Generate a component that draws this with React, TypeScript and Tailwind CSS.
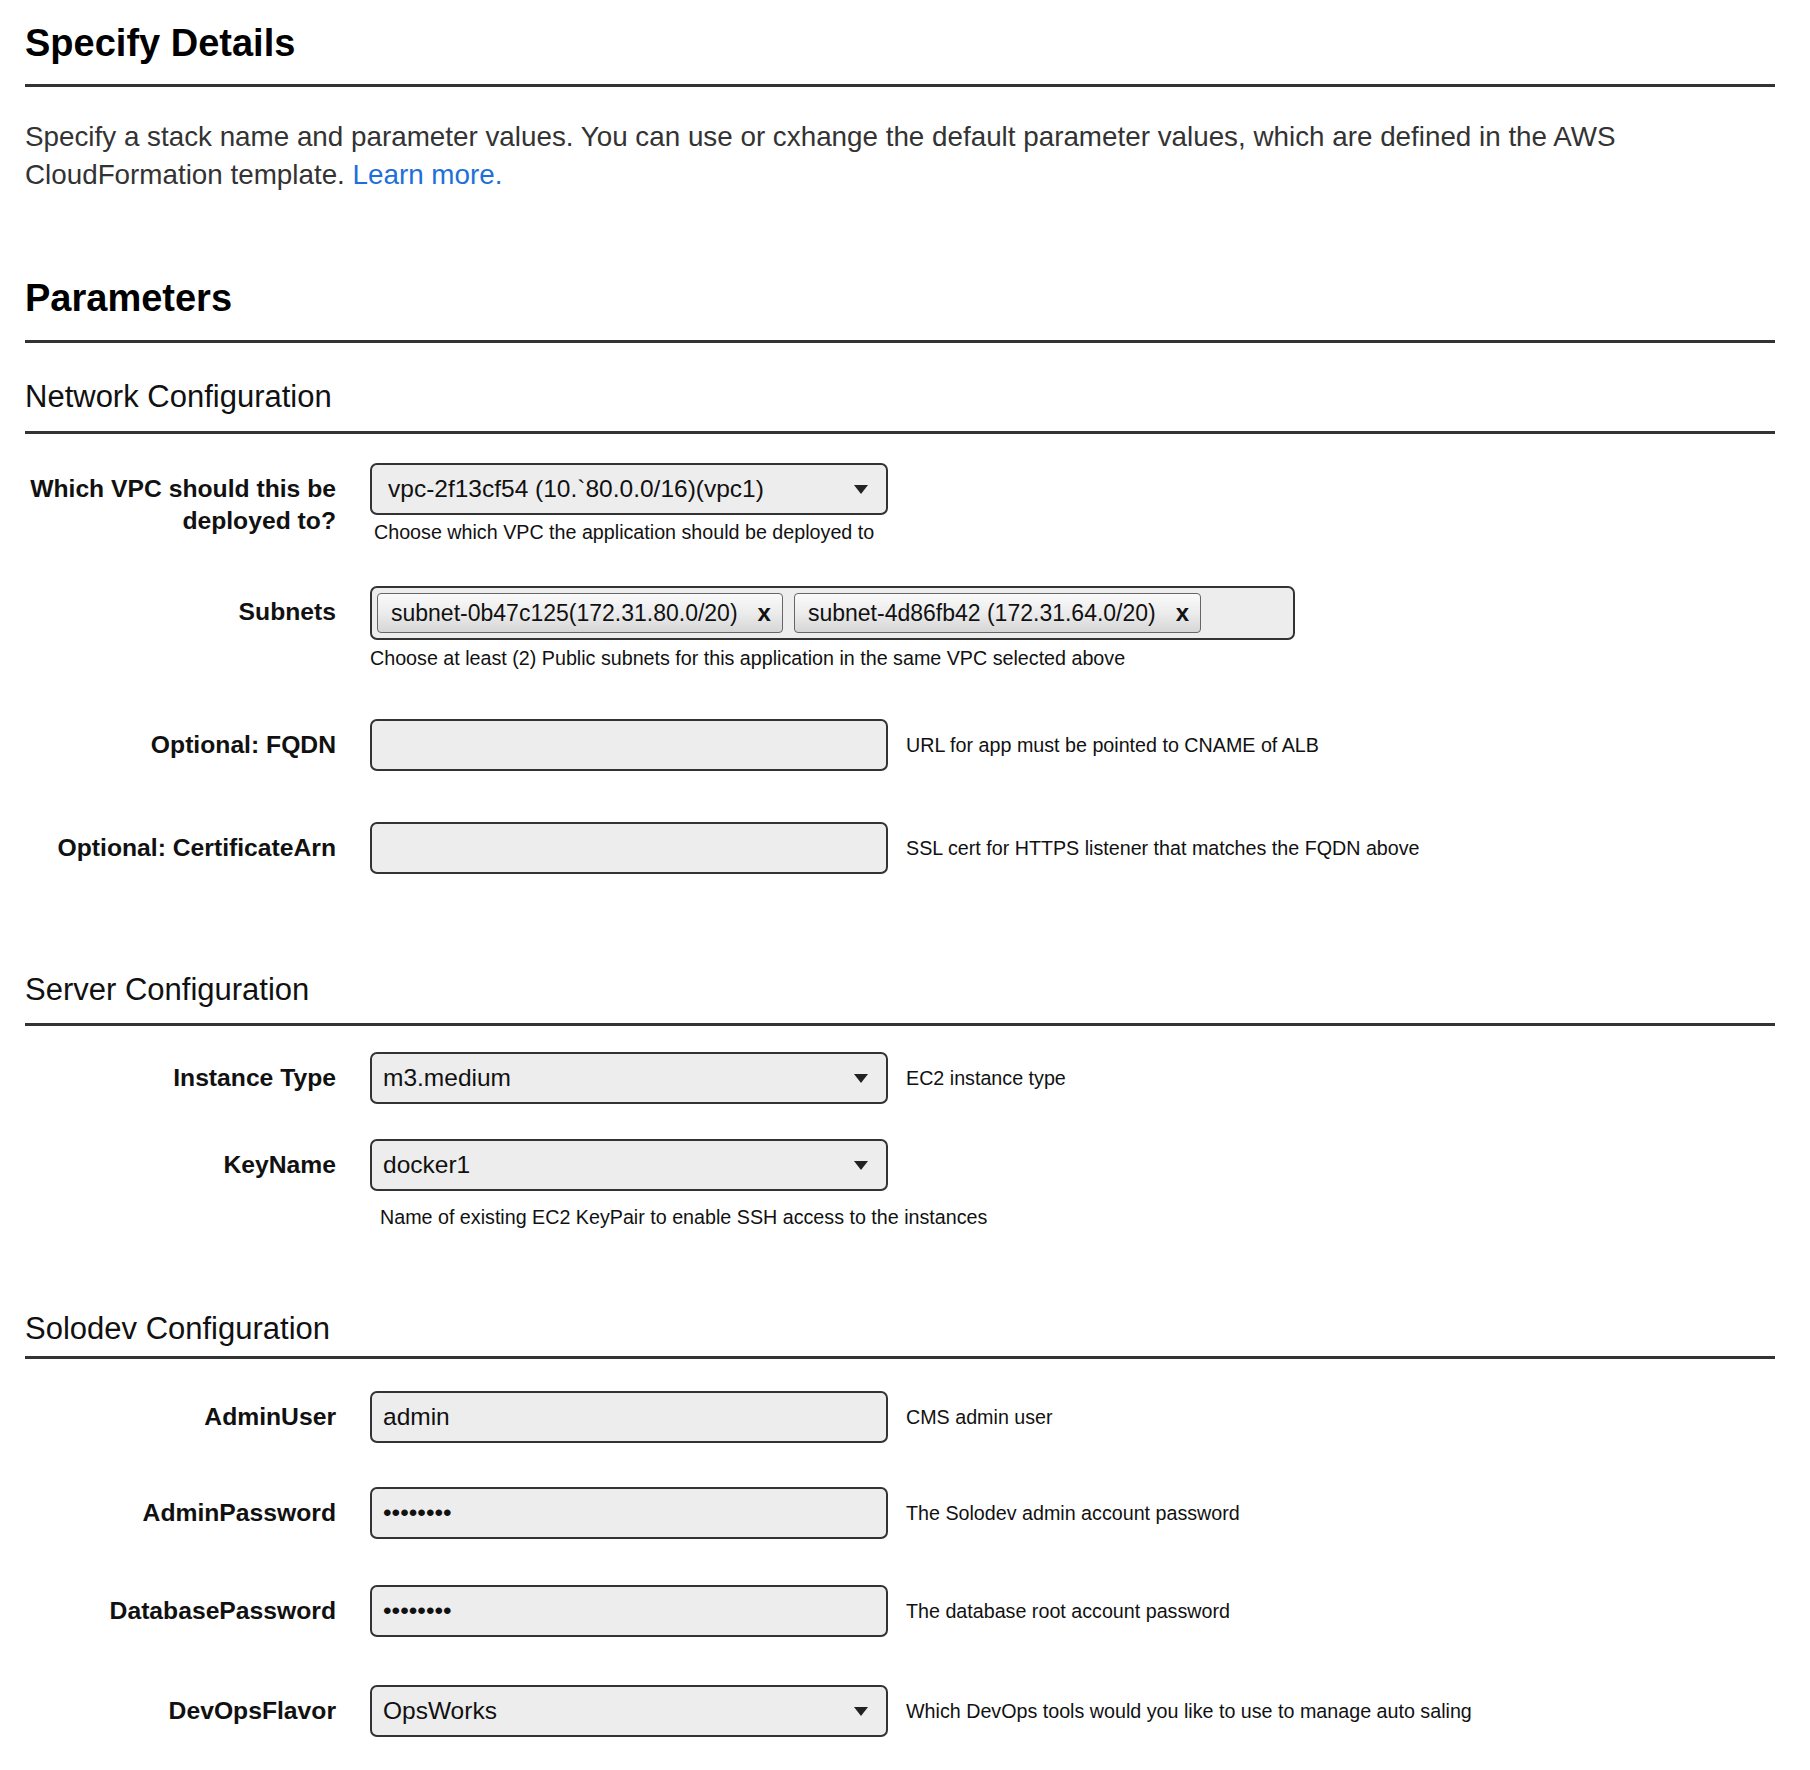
const font = { fontFamily: '"Liberation Sans", Arial, sans-serif' };

function Caret() {
  return (
    <svg width="14" height="9" viewBox="0 0 14 9" className="shrink-0">
      <path d="M0 0 H14 L7 9 Z" fill="#222" />
    </svg>
  );
}

function Label({ children }: { children: React.ReactNode }) {
  return (
    <div className="w-[311px] shrink-0 pt-[10px] text-right text-[24.7px] font-bold leading-[32px] text-[#111]">
      {children}
    </div>
  );
}

function Box({ value, select, pl = 'pl-[11px]' }: { value?: string; select?: boolean; pl?: string }) {
  return (
    <div className={`flex h-[52px] w-[518px] shrink-0 items-center justify-between rounded-[7px] border-2 border-[#333] bg-[#ededed] pr-[18px] ${pl}`}>
      <span className="text-[24.5px] leading-none text-[#111]">{value}</span>
      {select && <Caret />}
    </div>
  );
}

function Side({ children }: { children: React.ReactNode }) {
  return <span className="ml-[18px] text-[19.7px] leading-[24px] text-[#111]">{children}</span>;
}

function Chip({ text }: { text: string }) {
  return (
    <div className="flex h-[40px] items-center rounded-[4px] border border-[#666] bg-gradient-to-b from-[#fafafa] via-[#ececec] to-[#d6d6d6] pl-[13px] pr-[11px]">
      <span className="text-[23px] leading-none text-[#111]">{text}</span>
      <span className="ml-[20px] text-[24px] font-bold leading-none text-[#111]">x</span>
    </div>
  );
}

function SectionHeading({ children, pb, mt }: { children: React.ReactNode; pb: string; mt: string }) {
  return (
    <h3 className={`border-b-[3px] border-[#333] text-[31px] font-normal leading-[36px] text-[#111] ${pb} ${mt}`}>
      {children}
    </h3>
  );
}

export default function App() {
  return (
    <div style={font} className="min-h-[1770px] bg-white pl-[25px] pr-[35px] pt-[21px] text-black">
      <h1 className="border-b-[3px] border-[#333] pb-[19px] text-[38px] font-bold leading-[44px]">Specify Details</h1>
      <p className="mt-[31px] text-[27.8px] leading-[38px] text-[#333]">
        Specify a stack name and parameter values. You can use or cxhange the default parameter values, which are defined in the AWS CloudFormation template. <a className="text-[#1e6fd9]">Learn more.</a>
      </p>

      <h2 className="mt-[82px] border-b-[3px] border-[#333] pb-[20px] text-[38px] font-bold leading-[44px]">Parameters</h2>

      <SectionHeading mt="mt-[36px]" pb="pb-[16px]">Network Configuration</SectionHeading>

      <div className="mt-[29px] flex gap-[34px]">
        <Label>
          Which VPC should this be
          <br />
          deployed to?
        </Label>
        <div>
          <Box value="vpc-2f13cf54 (10.`80.0.0/16)(vpc1)" select pl="pl-[16px]" />
          <div className="mt-[5px] pl-[4px] text-[19.7px] leading-[24px] text-[#111]">Choose which VPC the application should be deployed to</div>
        </div>
      </div>

      <div className="mt-[42px] flex gap-[34px]">
        <Label>Subnets</Label>
        <div>
          <div className="flex h-[54px] w-[925px] items-center gap-[11px] rounded-[7px] border-2 border-[#333] bg-[#ededed] px-[5px]">
            <Chip text="subnet-0b47c125(172.31.80.0/20)" />
            <Chip text="subnet-4d86fb42 (172.31.64.0/20)" />
          </div>
          <div className="mt-[6px] text-[19.7px] leading-[24px] text-[#111]">Choose at least (2) Public subnets for this application in the same VPC selected above</div>
        </div>
      </div>

      <div className="mt-[49px] flex gap-[34px]">
        <Label>Optional: FQDN</Label>
        <div className="flex items-center">
          <Box />
          <Side>URL for app must be pointed to CNAME of ALB</Side>
        </div>
      </div>

      <div className="mt-[51px] flex gap-[34px]">
        <Label>Optional: CertificateArn</Label>
        <div className="flex items-center">
          <Box />
          <Side>SSL cert for HTTPS listener that matches the FQDN above</Side>
        </div>
      </div>

      <SectionHeading mt="mt-[98px]" pb="pb-[15px]">Server Configuration</SectionHeading>

      <div className="mt-[26px] flex gap-[34px]">
        <Label>Instance Type</Label>
        <div className="flex items-center">
          <Box value="m3.medium" select />
          <Side>EC2 instance type</Side>
        </div>
      </div>

      <div className="mt-[35px] flex gap-[34px]">
        <Label>KeyName</Label>
        <div>
          <Box value="docker1" select />
          <div className="mt-[14px] pl-[10px] text-[19.7px] leading-[24px] text-[#111]">Name of existing EC2 KeyPair to enable SSH access to the instances</div>
        </div>
      </div>

      <SectionHeading mt="mt-[82px]" pb="pb-[9px]">Solodev Configuration</SectionHeading>

      <div className="mt-[32px] flex gap-[34px]">
        <Label>AdminUser</Label>
        <div className="flex items-center">
          <Box value="admin" />
          <Side>CMS admin user</Side>
        </div>
      </div>

      <div className="mt-[44px] flex gap-[34px]">
        <Label>AdminPassword</Label>
        <div className="flex items-center">
          <Box value="••••••••" />
          <Side>The Solodev admin account password</Side>
        </div>
      </div>

      <div className="mt-[46px] flex gap-[34px]">
        <Label>DatabasePassword</Label>
        <div className="flex items-center">
          <Box value="••••••••" />
          <Side>The database root account password</Side>
        </div>
      </div>

      <div className="mt-[48px] flex gap-[34px]">
        <Label>DevOpsFlavor</Label>
        <div className="flex items-center">
          <Box value="OpsWorks" select />
          <Side>Which DevOps tools would you like to use to manage auto saling</Side>
        </div>
      </div>
    </div>
  );
}
